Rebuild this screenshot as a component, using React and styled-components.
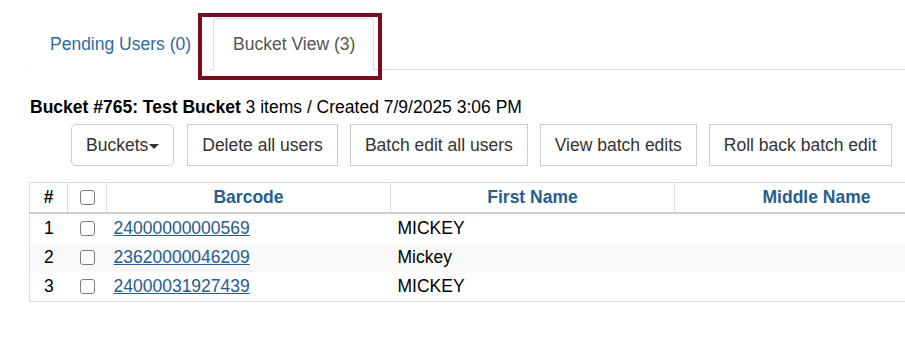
import React from 'react'
import styled, { createGlobalStyle } from 'styled-components'

const GlobalStyle = createGlobalStyle`
  body {
    margin: 0;
    background: #fff;
    font-family: 'Liberation Sans', Arial, sans-serif;
    font-size: 17.5px;
    line-height: 25px;
    color: #000;
    overflow: hidden;
  }
`

const Page = styled.div`
  padding: 18px 0 0 29px;
  overflow: hidden;
`

const Tabs = styled.ul`
  display: flex;
  list-style: none;
  margin: 0;
  padding: 0 0 0 1px;
  border-bottom: 1px solid #ddd;
`

const Tab = styled.li`
  position: relative;
  margin-right: 3px;
  margin-bottom: -1px;
  padding: 12.5px 18px 12.5px 19px;
  border: 1px solid ${(p) => (p.$active ? '#ddd' : 'transparent')};
  border-bottom-color: transparent;
  border-radius: 4px 4px 0 0;
  background: #fff;
  color: ${(p) => (p.$active ? '#555' : '#2d6ca2')};
  cursor: pointer;

  ${(p) =>
    p.$highlight &&
    `
    &::after {
      content: '';
      position: absolute;
      left: -16px;
      top: -6px;
      right: -9px;
      bottom: -11px;
      border: 4.5px solid #7a0a1d;
      pointer-events: none;
    }
  `}
`

const Heading = styled.div`
  margin-top: 25px;
  padding-left: 1px;
  strong {
    font-weight: bold;
  }
`

const Toolbar = styled.div`
  display: flex;
  gap: 12px;
  margin: 4px 0 0 42px;
`

const Button = styled.button`
  font-family: inherit;
  font-size: 17.5px;
  line-height: 25px;
  color: #333;
  background: #fff;
  border: 1px solid #ccc;
  border-radius: ${(p) => (p.$rounded ? '5px' : '0')};
  padding: 7.5px 14px;
  margin-right: ${(p) => (p.$rounded ? '1px' : '0')};
  white-space: nowrap;
  cursor: pointer;
  display: flex;
  align-items: center;
`

const Caret = styled.span`
  display: inline-block;
  width: 0;
  height: 0;
  margin-left: 1px;
  margin-top: 2px;
  border-top: 5px solid #333;
  border-left: 5px solid transparent;
  border-right: 5px solid transparent;
`

const Table = styled.table`
  margin-top: 16px;
  width: 929px;
  table-layout: fixed;
  border-collapse: collapse;
  border: 1px solid #ddd;
`

const HeadCell = styled.th`
  height: 29px;
  padding: 0 7px;
  font-weight: bold;
  text-align: center;
  color: ${(p) => (p.$plain ? '#000' : '#275e8f')};
  border-left: 1px solid #ddd;
  border-bottom: 2px solid #d0d0d0;
  vertical-align: middle;
`

const Row = styled.tr`
  background: ${(p) => (p.$striped ? '#f8f8f8' : '#fff')};
  & + & td {
    border-top: 2px solid #d0d0d0;
  }
`

const Cell = styled.td`
  height: 29px;
  padding: 0 7px;
  text-align: ${(p) => (p.$center ? 'center' : 'left')};
  vertical-align: middle;
  white-space: nowrap;
`

const Check = styled.input.attrs({ type: 'checkbox' })`
  -webkit-appearance: none;
  appearance: none;
  display: inline-block;
  box-sizing: border-box;
  width: 15px;
  height: 15px;
  margin: 0;
  border: 1px solid #7d7d7d;
  border-radius: 3px;
  background: #fff;
  vertical-align: middle;
  position: relative;
  top: -1px;
`

const BarcodeLink = styled.a`
  color: #265c8e;
  text-decoration: underline;
`

const users = [
  { barcode: '24000000000569', first: 'MICKEY' },
  { barcode: '23620000046209', first: 'Mickey' },
  { barcode: '24000031927439', first: 'MICKEY' },
]

const actions = ['Delete all users', 'Batch edit all users', 'View batch edits', 'Roll back batch edit']

export default function App() {
  return (
    <>
      <GlobalStyle />
      <Page>
        <Tabs>
          <Tab>Pending Users (0)</Tab>
          <Tab $active $highlight>
            Bucket View (3)
          </Tab>
        </Tabs>

        <Heading>
          <strong>Bucket #765: Test Bucket</strong> 3 items / Created 7/9/2025 3:06 PM
        </Heading>

        <Toolbar>
          <Button $rounded>
            Buckets
            <Caret />
          </Button>
          {actions.map((label) => (
            <Button key={label}>{label}</Button>
          ))}
        </Toolbar>

        <Table>
          <colgroup>
            <col style={{ width: 38 }} />
            <col style={{ width: 39 }} />
            <col style={{ width: 284 }} />
            <col style={{ width: 284 }} />
            <col style={{ width: 284 }} />
          </colgroup>
          <thead>
            <tr>
              <HeadCell $plain>#</HeadCell>
              <HeadCell>
                <Check />
              </HeadCell>
              <HeadCell>Barcode</HeadCell>
              <HeadCell>First Name</HeadCell>
              <HeadCell>Middle Name</HeadCell>
            </tr>
          </thead>
          <tbody>
            {users.map((u, i) => (
              <Row key={u.barcode} $striped={i % 2 === 1}>
                <Cell $center>{i + 1}</Cell>
                <Cell $center>
                  <Check />
                </Cell>
                <Cell>
                  <BarcodeLink href="#">{u.barcode}</BarcodeLink>
                </Cell>
                <Cell>{u.first}</Cell>
                <Cell />
              </Row>
            ))}
          </tbody>
        </Table>
      </Page>
    </>
  )
}
